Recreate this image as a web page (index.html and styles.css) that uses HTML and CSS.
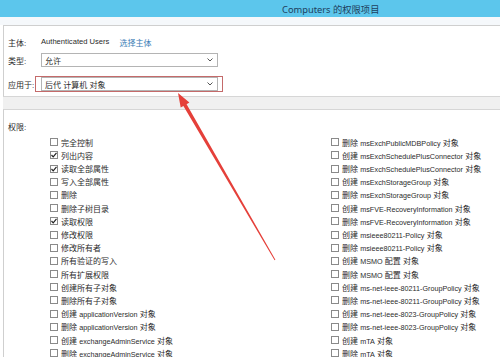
FILE: index.html
```html
<!DOCTYPE html>
<html lang="zh-CN">
<head>
    <meta charset="UTF-8">
    <meta name="viewport" content="width=device-width, initial-scale=1.0">
    <title>Computers 的权限项目</title>
    <link rel="stylesheet" href="styles.css">
</head>
<body>
    <div class="titlebar">
        <span class="title">Computers 的权限项目</span>
    </div>
    <div class="strip"></div>

    <div class="window">
        <section class="panel head-panel">
            <div class="field">
                <span class="field-label">主体:</span>
                <div class="field-value">
                    <span>Authenticated Users</span>
                    <a class="link" href="#">选择主体</a>
                </div>
            </div>
            <div class="field">
                <span class="field-label">类型:</span>
                <div class="select">
                    <span>允许</span>
                    <svg class="chevron" viewBox="0 0 6 4" width="6" height="4"><polyline points="0.5,0.5 3,3 5.5,0.5" fill="none" stroke="#555" stroke-width="1"/></svg>
                </div>
            </div>
            <div class="field">
                <span class="field-label">应用于:</span>
                <div class="select">
                    <span>后代 计算机 对象</span>
                    <svg class="chevron" viewBox="0 0 6 4" width="6" height="4"><polyline points="0.5,0.5 3,3 5.5,0.5" fill="none" stroke="#555" stroke-width="1"/></svg>
                </div>
            </div>
        </section>

        <div class="band"></div>

        <section class="panel perm-panel">
            <div class="perm-title">权限:</div>
            <div class="perm-grid">
                <div class="perm-col" id="leftCol"></div>
                <div class="perm-col" id="rightCol"></div>
            </div>
        </section>
    </div>

    <!-- annotation: red box + arrow -->
    <div class="mark-box"></div>
    <svg class="arrow" width="500" height="357" viewBox="0 0 500 357">
        <polygon points="178,93 189.4,102.6 186.6,104.2 275.4,259.8 274.6,260.2 183.4,106 180.7,107.6" fill="#e5403a"/>
    </svg>

    <script>
        const leftItems = [
            ['完全控制', false],
            ['列出内容', true],
            ['读取全部属性', true],
            ['写入全部属性', false],
            ['删除', false],
            ['删除子树目录', false],
            ['读取权限', true],
            ['修改权限', false],
            ['修改所有者', false],
            ['所有验证的写入', false],
            ['所有扩展权限', false],
            ['创建所有子对象', false],
            ['删除所有子对象', false],
            ['创建 applicationVersion 对象', false],
            ['删除 applicationVersion 对象', false],
            ['创建 exchangeAdminService 对象', false],
            ['删除 exchangeAdminService 对象', false]
        ];

        const rightItems = [
            '删除 msExchPublicMDBPolicy 对象',
            '创建 msExchSchedulePlusConnector 对象',
            '删除 msExchSchedulePlusConnector 对象',
            '创建 msExchStorageGroup 对象',
            '删除 msExchStorageGroup 对象',
            '创建 msFVE-RecoveryInformation 对象',
            '删除 msFVE-RecoveryInformation 对象',
            '创建 msieee80211-Policy 对象',
            '删除 msieee80211-Policy 对象',
            '创建 MSMO 配置 对象',
            '删除 MSMO 配置 对象',
            '创建 ms-net-ieee-80211-GroupPolicy 对象',
            '删除 ms-net-ieee-80211-GroupPolicy 对象',
            '创建 ms-net-ieee-8023-GroupPolicy 对象',
            '删除 ms-net-ieee-8023-GroupPolicy 对象',
            '创建 mTA 对象',
            '删除 mTA 对象'
        ];

        const checkMark = '<svg viewBox="0 0 8 8" width="8" height="8"><polyline points="1.5,4 3.2,5.8 6.5,1.8" fill="none" stroke="#222" stroke-width="1.2"/></svg>';

        // latin words are set a bit smaller than the CJK text
        function formatLabel(text) {
            return text.replace(/([A-Za-z0-9][A-Za-z0-9\-]*)/g, '<span class="en">$1</span>');
        }

        function renderRow(text, checked) {
            return `
                <div class="perm-row">
                    <span class="box">${checked ? checkMark : ''}</span>
                    <span class="perm-label">${formatLabel(text)}</span>
                </div>`;
        }

        document.getElementById('leftCol').innerHTML = leftItems.map(([t, c]) => renderRow(t, c)).join('');
        document.getElementById('rightCol').innerHTML = rightItems.map(t => renderRow(t, false)).join('');
    </script>
</body>
</html>
```

FILE: styles.css
```css
body {
    margin: 0;
    width: 500px;
    height: 357px;
    overflow: hidden;
    background-color: #fff;
    font-family: "Liberation Sans", "Noto Sans CJK SC", sans-serif;
    font-size: 8px;
    color: #2b2b2b;
    position: relative;
}
.titlebar {
    height: 17px;
    background-color: #5cc6ec;
    display: flex;
    align-items: center;
    padding-left: 282px;
}
.title {
    font-family: "Noto Sans", "Noto Sans CJK SC", sans-serif;
    font-size: 9.3px;
    color: #1e3f5e;
}
.strip {
    height: 8px;
    background-color: #f5f8fb;
}
.window {
    margin-left: 3px;
}
.panel {
    border-left: 1px solid #cfcfcf;
    background-color: #fff;
}
.head-panel {
    border-top: 1px solid #cfcfcf;
    border-bottom: 1px solid #d6d6d6;
    padding: 10px 0 5px 4px;
    display: flex;
    flex-direction: column;
    gap: 10px;
}
.field {
    display: flex;
    align-items: center;
    height: 14px;
}
.field:first-child {
    height: 12px;
    margin-bottom: -5px;
}
.field-label {
    width: 33px;
    flex-shrink: 0;
}
.field-value {
    display: flex;
    gap: 10px;
    font-size: 7.6px;
}
.link {
    color: #3a7db5;
    text-decoration: none;
    font-size: 8px;
}
.select {
    width: 177px;
    height: 14px;
    box-sizing: border-box;
    border: 1px solid #b4b4b4;
    display: flex;
    align-items: center;
    justify-content: space-between;
    padding: 0 4px 0 3px;
}
.band {
    height: 12px;
    background-color: #f0f0f0;
}
.perm-panel {
    border-top: 1px solid #d6d6d6;
    padding: 12px 0 0 4px;
}
.perm-title {
    height: 12px;
    line-height: 12px;
}
.perm-grid {
    display: grid;
    grid-template-columns: 281px 1fr;
    padding-left: 42px;
    margin-top: 1.6px;
}
.perm-row {
    height: 13.2px;
    display: flex;
    align-items: center;
    white-space: nowrap;
}
.box {
    width: 8px;
    height: 8px;
    box-sizing: border-box;
    border: 1px solid #8a8a8a;
    background-color: #fff;
    display: flex;
    align-items: center;
    justify-content: center;
    flex-shrink: 0;
}
.box svg {
    flex-shrink: 0;
}
.perm-label {
    margin-left: 3px;
}
.en {
    font-size: 7.2px;
}
.mark-box {
    position: absolute;
    left: 35px;
    top: 76px;
    width: 188px;
    height: 16px;
    box-sizing: border-box;
    border: 1px solid #c46a6a;
}
.arrow {
    position: absolute;
    left: 0;
    top: 0;
    pointer-events: none;
}
```
